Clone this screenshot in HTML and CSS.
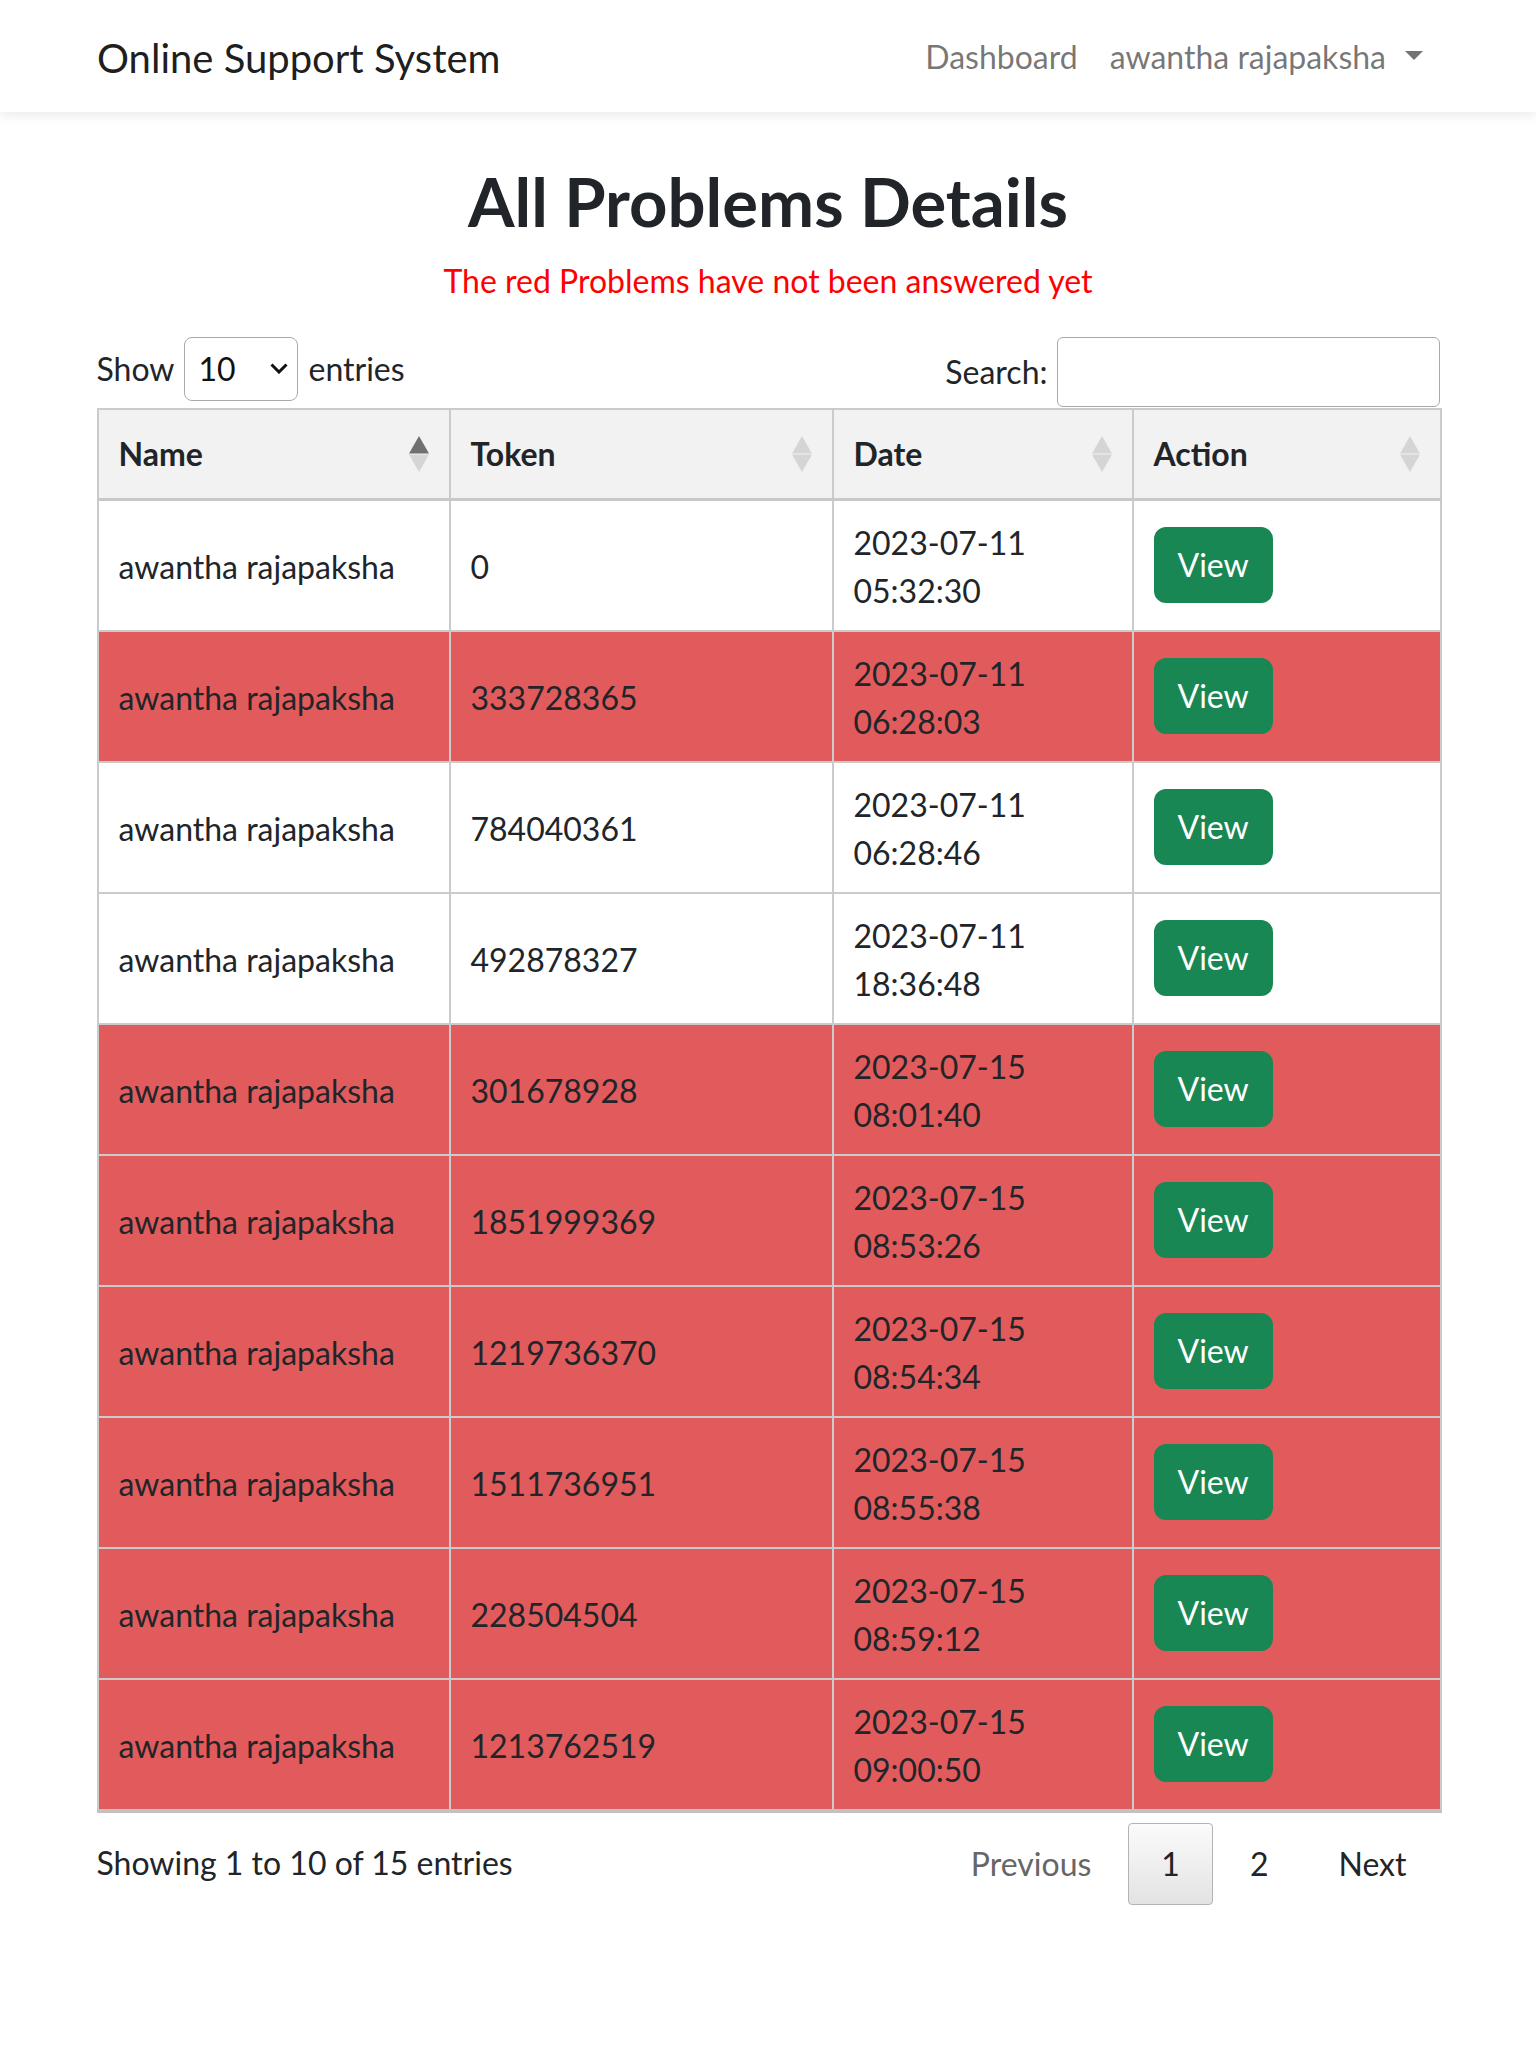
FILE: index.html
```html
<!DOCTYPE html>
<html lang="en">
<head>
<meta charset="utf-8">
<title>All Problems Details</title>
<link rel="stylesheet" href="styles.css">
</head>
<body>
<nav class="navbar">
  <div class="nav-inner">
    <a class="brand" href="#">Online Support System</a>
    <ul class="nav-links">
      <li><a class="nav-link" href="#">Dashboard</a></li>
      <li><a class="nav-link" href="#">awantha rajapaksha<span class="caret"></span></a></li>
    </ul>
  </div>
</nav>
<main class="container">
  <h1 class="title">All Problems Details</h1>
  <p class="note">The red Problems have not been answered yet</p>
  <div class="dt-top">
    <label class="dt-length">Show
      <span class="select-wrap">
        <select class="dt-select"><option>10</option><option>25</option><option>50</option><option>100</option></select>
        <svg class="chev" width="18" height="11" viewBox="0 0 18 11"><polyline points="1.5,1.5 9,9 16.5,1.5" fill="none" stroke="#111" stroke-width="3"/></svg>
      </span>
      entries</label>
    <label class="dt-filter">Search:<input class="dt-search" type="search"></label>
  </div>
  <table class="dt">
    <colgroup>
      <col class="c1"><col class="c2"><col class="c3"><col class="c4">
    </colgroup>
    <thead>
      <tr>
        <th><div class="th-in"><span>Name</span><svg class="sort" width="20" height="36" viewBox="0 0 20 36"><polygon points="10,0 20,17.5 0,17.5" fill="#707070"/><polygon points="0,18.5 20,18.5 10,36" fill="#d5d5d5"/></svg></div></th>
        <th><div class="th-in"><span>Token</span><svg class="sort" width="20" height="36" viewBox="0 0 20 36"><polygon points="10,0 20,17.5 0,17.5" fill="#d5d5d5"/><polygon points="0,18.5 20,18.5 10,36" fill="#d5d5d5"/></svg></div></th>
        <th><div class="th-in"><span>Date</span><svg class="sort" width="20" height="36" viewBox="0 0 20 36"><polygon points="10,0 20,17.5 0,17.5" fill="#d5d5d5"/><polygon points="0,18.5 20,18.5 10,36" fill="#d5d5d5"/></svg></div></th>
        <th><div class="th-in"><span>Action</span><svg class="sort" width="20" height="36" viewBox="0 0 20 36"><polygon points="10,0 20,17.5 0,17.5" fill="#d5d5d5"/><polygon points="0,18.5 20,18.5 10,36" fill="#d5d5d5"/></svg></div></th>
      </tr>
    </thead>
    <tbody>
      <tr><td>awantha rajapaksha</td><td>0</td><td>2023-07-11 05:32:30</td><td><a class="btn" href="#">View</a></td></tr>
      <tr class="red"><td>awantha rajapaksha</td><td>333728365</td><td>2023-07-11 06:28:03</td><td><a class="btn" href="#">View</a></td></tr>
      <tr><td>awantha rajapaksha</td><td>784040361</td><td>2023-07-11 06:28:46</td><td><a class="btn" href="#">View</a></td></tr>
      <tr><td>awantha rajapaksha</td><td>492878327</td><td>2023-07-11 18:36:48</td><td><a class="btn" href="#">View</a></td></tr>
      <tr class="red"><td>awantha rajapaksha</td><td>301678928</td><td>2023-07-15 08:01:40</td><td><a class="btn" href="#">View</a></td></tr>
      <tr class="red"><td>awantha rajapaksha</td><td>1851999369</td><td>2023-07-15 08:53:26</td><td><a class="btn" href="#">View</a></td></tr>
      <tr class="red"><td>awantha rajapaksha</td><td>1219736370</td><td>2023-07-15 08:54:34</td><td><a class="btn" href="#">View</a></td></tr>
      <tr class="red"><td>awantha rajapaksha</td><td>1511736951</td><td>2023-07-15 08:55:38</td><td><a class="btn" href="#">View</a></td></tr>
      <tr class="red"><td>awantha rajapaksha</td><td>228504504</td><td>2023-07-15 08:59:12</td><td><a class="btn" href="#">View</a></td></tr>
      <tr class="red"><td>awantha rajapaksha</td><td>1213762519</td><td>2023-07-15 09:00:50</td><td><a class="btn" href="#">View</a></td></tr>
    </tbody>
  </table>
  <div class="dt-bottom">
    <div class="dt-info">Showing 1 to 10 of 15 entries</div>
    <div class="dt-paginate">
      <a class="pg disabled" href="#">Previous</a>
      <a class="pg current" href="#">1</a>
      <a class="pg" href="#">2</a>
      <a class="pg" href="#">Next</a>
    </div>
  </div>
</main>
</body>
</html>
```
FILE: styles.css
```css
* { box-sizing: border-box; }

body {
  margin: 0;
  font-family: Lato, "Open Sans", sans-serif;
  font-size: 32px;
  line-height: 48px;
  color: #212529;
  background: #fff;
}

a { text-decoration: none; }

.navbar {
  height: 112px;
  padding-top: 2px;
  background: #fff;
  box-shadow: 0 4px 10px rgba(0, 0, 0, 0.08);
  display: flex;
  align-items: center;
}

.nav-inner {
  width: 1342px;
  margin: 0 auto;
  display: flex;
  align-items: center;
  justify-content: space-between;
}

.brand {
  font-size: 40px;
  line-height: 60px;
  padding-top: 2px;
  color: rgba(0, 0, 0, 0.9);
}

.nav-links {
  list-style: none;
  margin: 0;
  padding: 0;
  display: flex;
}

.nav-link {
  display: block;
  padding: 0 16px;
  color: rgba(0, 0, 0, 0.55);
}

.caret {
  display: inline-block;
  margin-left: 19px;
  vertical-align: 9px;
  border-top: 9px solid;
  border-left: 9px solid transparent;
  border-right: 9px solid transparent;
  border-bottom: 0;
}

.container {
  width: 1343px;
  margin: 0 auto;
}

.title {
  margin: 49px 0 16px;
  font-size: 67px;
  line-height: 80px;
  font-weight: 700;
  text-align: center;
}

.note {
  margin: 0 0 32px;
  color: #ff0000;
  text-align: center;
}

.dt-top {
  display: flex;
  justify-content: space-between;
  align-items: flex-start;
  height: 71px;
}

.dt-length {
  display: flex;
  align-items: center;
  gap: 10px;
}

.select-wrap {
  position: relative;
  display: block;
  width: 114px;
  height: 64px;
}

.dt-select {
  appearance: none;
  -webkit-appearance: none;
  width: 114px;
  height: 64px;
  padding: 0 0 0 13px;
  border: 1px solid #a9a9a9;
  border-radius: 8px;
  background: transparent;
  font: inherit;
  color: #111;
}

.chev {
  position: absolute;
  left: 86px;
  top: 26px;
  pointer-events: none;
}

.dt-filter {
  display: flex;
  align-items: center;
  gap: 9px;
  height: 70px;
}

.dt-search {
  width: 383px;
  height: 70px;
  border: 1px solid #a9a9a9;
  border-radius: 6px;
  font: inherit;
  padding: 0 10px;
}

.dt {
  width: 1343px;
  border-collapse: collapse;
  table-layout: fixed;
}

.c1 { width: 352px; }
.c2 { width: 383px; }
.c3 { width: 300px; }
.c4 { width: 308px; }

.dt th,
.dt td {
  border: 2px solid #cbcbcb;
  text-align: left;
}

.dt th {
  background: #f2f2f2;
  padding: 20px 20px 20px;
  font-weight: 700;
  border-bottom: 3px solid #c8c8c8;
}

.th-in {
  display: flex;
  justify-content: space-between;
  align-items: center;
}

.sort { display: block; }

.dt td {
  padding: 18px 20px 15px;
  vertical-align: middle;
}

.dt tbody tr:last-child td { border-bottom: 4px solid #c2c2c2; }

.dt tr.red td { background: #e25b5c; }

.btn {
  display: inline-block;
  vertical-align: middle;
  margin-top: -4px;
  padding: 12px 22px;
  border: 2px solid #198754;
  border-radius: 12px;
  background: #198754;
  color: #fff;
  line-height: 48px;
}

.dt-bottom {
  display: flex;
  justify-content: space-between;
  align-items: flex-start;
}

.dt-info { padding-top: 26px; }

.dt-paginate {
  display: flex;
  padding-top: 10px;
}

.pg {
  display: block;
  padding: 16px 32px;
  margin-left: 4px;
  border: 1px solid transparent;
  border-radius: 4px;
  color: #212529;
  line-height: 48px;
}

.pg.disabled { color: #666; }

.pg.current {
  border-color: #b3b3b3;
  background: linear-gradient(to bottom, #fbfbfb 0%, #e3e3e3 100%);
}
```
